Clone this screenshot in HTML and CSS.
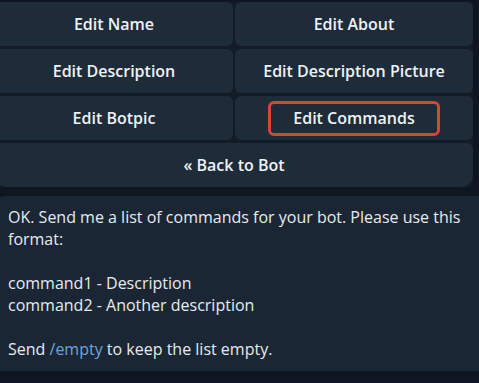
FILE: index.html
```html
<!DOCTYPE html>
<html lang="en">
<head>
  <meta charset="UTF-8">
  <meta name="viewport" content="width=device-width, initial-scale=1.0">
  <title>BotFather - Edit Bot</title>
  <link rel="stylesheet" href="styles.css">
</head>
<body>
  <div class="chat">
    <div class="keyboard">
      <button class="kb-btn">Edit Name</button>
      <button class="kb-btn">Edit About</button>
      <button class="kb-btn">Edit Description</button>
      <button class="kb-btn">Edit Description Picture</button>
      <button class="kb-btn">Edit Botpic</button>
      <button class="kb-btn"><span class="highlight">Edit Commands</span></button>
      <button class="kb-btn kb-wide">« Back to Bot</button>
    </div>

    <div class="message">
      <p>OK. Send me a list of commands for your bot. Please use this format:</p>
      <p>command1 - Description<br>command2 - Another description</p>
      <p>Send <a href="#" class="cmd">/empty</a> to keep the list empty.</p>
    </div>
  </div>
</body>
</html>
```

FILE: styles.css
```css
body {
  margin: 0;
  background-color: #0e1621;
  font-family: 'Open Sans', 'Noto Sans', sans-serif;
  height: 383px;
  overflow: hidden;
}

.chat {
  display: flex;
  flex-direction: column;
  gap: 9px;
  padding-top: 2px;
  margin-left: -5px;
}

.keyboard {
  display: grid;
  grid-template-columns: 1fr 1fr;
  gap: 3px 2px;
  width: 478px;
  background-color: #121b26;
}

.kb-btn {
  height: 44px;
  border: none;
  border-radius: 6px;
  background-color: #1e2b39;
  color: #eef2f5;
  font-family: inherit;
  font-size: 16px;
  font-weight: 600;
  padding: 0;
  display: flex;
  align-items: center;
  justify-content: center;
}

.kb-wide {
  grid-column: 1 / 3;
  border-radius: 6px 6px 12px 12px;
}

.highlight {
  display: inline-block;
  line-height: 22px;
  padding: 3px 22px 4px;
  border: 3px solid #d9443a;
  border-radius: 6px;
}

.message {
  box-sizing: border-box;
  width: 484px;
  height: 175px;
  padding: 10px 10px 8px 13px;
  background-color: #1b2634;
  border-radius: 10px 0 0 0;
  color: #e6ebef;
  font-size: 16px;
  line-height: 22px;
}

.message p {
  margin: 0 0 22px;
}

.message p:last-child {
  margin-bottom: 0;
}

.cmd {
  color: #6aa6dc;
  text-decoration: none;
}
```
